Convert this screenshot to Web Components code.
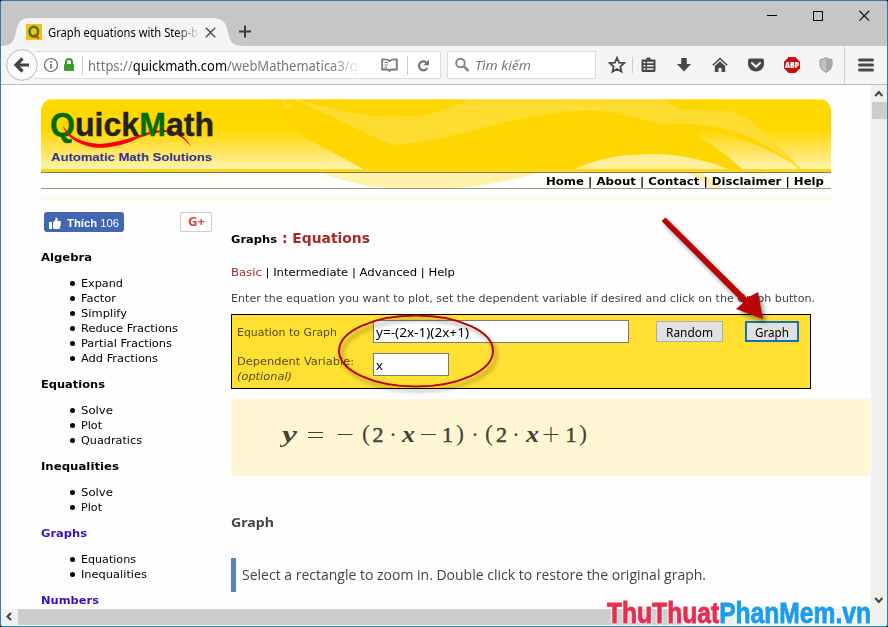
<!DOCTYPE html>
<html lang="vi">
<head>
<meta charset="utf-8">
<title>Graph equations with Step-by-Step Math Problem Solver</title>
<style>
html,body{margin:0;padding:0}
body{width:888px;height:627px;overflow:hidden;background:#000}
</style>
</head>
<body>
<browser-window>
  <browser-tabs></browser-tabs>
  <browser-toolbar></browser-toolbar>
  <page-view>
    <site-header slot="header"></site-header>
    <side-menu slot="side"></side-menu>
    <graph-main slot="main"></graph-main>
  </page-view>
  <mark-overlay slot="overlay"></mark-overlay>
</browser-window>

<script>
const fits = [];
function define(name, html, init) {
  const tpl = document.createElement('template');
  tpl.innerHTML = html;
  customElements.define(name, class extends HTMLElement {
    constructor() {
      super();
      this.attachShadow({mode: 'open'}).append(tpl.content.cloneNode(true));
    }
    connectedCallback() { if (init) init(this, this.shadowRoot); }
  });
}

/* Single-line text scaled horizontally to the width given in "w". */
define('fit-text', `<style>
:host{display:inline-block;white-space:pre;flex:none}
span{display:inline-block;transform-origin:0 50%}
</style><span><slot></slot></span>`, (el, root) => {
  fits.push(() => {
    const w = +el.getAttribute('w'), s = root.querySelector('span');
    const n = s.offsetWidth && s.getBoundingClientRect().width;
    el.style.width = w + 'px';
    if (n) s.style.transform = 'scaleX(' + w / n + ')';
  });
});

define('browser-window', `<style>
:host{display:flex;flex-direction:column;position:relative;box-sizing:border-box;width:888px;height:627px;overflow:hidden;
border:1px solid #2c7cbc;border-top-color:#3a76ae;border-bottom-color:#1c84d0;border-radius:3px 3px 3px 3px;background:#fff}
</style><slot></slot><slot name="overlay"></slot>`);

define('browser-tabs', `<style>
:host{display:flex;position:relative;height:45px;background:#c6c6c6;font:12px "Noto Sans",sans-serif;color:#000;flex:none}
.tab{display:flex;align-items:center;box-sizing:border-box;width:238px;height:28px;margin-top:17px;padding-left:25px;position:relative}
.shape{position:absolute;left:0;top:0}
.fav{flex:none;position:relative;margin-right:6px}
.title{position:relative;width:157px;overflow:hidden;-webkit-mask-image:linear-gradient(90deg,#000 128px,transparent 152px);mask-image:linear-gradient(90deg,#000 128px,transparent 152px)}
.x{position:relative;flex:none}
.plus{margin-top:24px;flex:none}
.ctl{margin-left:auto;display:flex;gap:35px;padding:9px 17px 0 0;height:12px}
</style>
<div class="tab">
<svg class="shape" width="242" height="28"><path d="M0 28C10 28 13 24 15 14C17 5 19 0 29 0H212C222 0 225 5 227 14C229 24 232 28 242 28Z" fill="#f5f5f5"/></svg>
<svg class="fav" width="16" height="16"><rect width="16" height="16" fill="#fdbf0c"/><ellipse cx="7.800" cy="7.600" rx="4.300" ry="4.900" fill="none" stroke="#2b7a12" stroke-width="2.500"/><path d="M8 10.500l5 4" stroke="#d84010" stroke-width="2"/></svg>
<div class="title"><fit-text w="150">Graph equations with Step-b</fit-text></div>
<svg class="x" width="11" height="11"><path d="M.8.8l9.400 9.400M10.200.8L.8 10.200" stroke="#444" stroke-width="1.300"/></svg>
</div>
<svg class="plus" width="13" height="13"><path d="M6 .5v12M0 6.500h12" stroke="#3c3c3c" stroke-width="2"/></svg>
<div class="ctl">
<svg width="11" height="12"><path d="M0 5.500h10" stroke="#000"/></svg>
<svg width="11" height="12"><path d="M.5 1.500h9v9h-9z" fill="none" stroke="#000"/></svg>
<svg width="11" height="12"><path d="M.5 1l9.600 9.600M10.100 1L.5 10.600" stroke="#111" stroke-width="1.200"/></svg>
</div>`);

define('browser-toolbar', `<style>
:host{display:flex;align-items:center;height:38px;background:#f5f5f5;border-bottom:1px solid #bcbcbc;flex:none;font:14px "Noto Sans",sans-serif;color:#777}
svg{display:block;flex:none}
.back{margin-left:5px;position:relative}
.url,.search{box-sizing:border-box;height:28px;background:#fff;border:1px solid #ddd;display:flex;align-items:center}
.url{width:406px;margin-left:-3px;border-left:0;padding-left:8px;border-radius:0 2px 2px 0}
.url b{font-weight:400;color:#000}
.sep{width:1px;height:19px;background:#ccc;flex:none}
.addr{width:282px;margin-left:5px;overflow:hidden;-webkit-mask-image:linear-gradient(90deg,#000 243px,transparent 273px);mask-image:linear-gradient(90deg,#000 243px,transparent 273px)}
.search{width:149px;margin-left:6px;padding-left:6px;gap:5px;font-style:italic;font-size:13px}
.c{display:flex;justify-content:center;align-items:center;height:30px;flex:none}
</style>
<svg class="back" width="32" height="32"><circle cx="16" cy="16" r="15.300" fill="#fbfbfb" stroke="#bbb"/><path d="M16.500 9.500L10 16l6.500 6.500M10.500 16H23" fill="none" stroke="#444" stroke-width="3.200"/></svg>
<div class="url">
<svg width="15" height="16"><circle cx="8" cy="8" r="6.500" fill="none" stroke="#666" stroke-width="1.200"/><path d="M8 7v4.500M8 4v1.700" stroke="#666" stroke-width="1.600"/></svg>
<svg width="12" height="16" style="margin:0 7px 0 5px"><path d="M3 8V5a3 3 0 0 1 6 0v3" fill="none" stroke="#3f9b25" stroke-width="2"/><rect x="1" y="7" width="10" height="7" rx="1" fill="#3f9b25"/></svg>
<div class="sep"></div>
<div class="addr"><fit-text w="281">https://<b>quickmath.com</b>/webMathematica3/qui</fit-text></div>
<svg width="17" height="14" style="margin-left:11px"><path d="M8.500 3Q6 .8 1.200 1.500V11.500H7L8.500 13L10 11.500H15.800V1.500Q11 .8 8.500 3Z" fill="none" stroke="#777" stroke-width="1.800"/><path d="M3.500 4.500H7M3.500 7H7M3.500 9.300H6" stroke="#777"/></svg>
<div class="sep" style="margin:0 9px 0 9px"></div>
<svg width="13" height="13"><path d="M10.300 9.200A4.500 4.500 0 1 1 9.200 3.200" fill="none" stroke="#777" stroke-width="2.200"/><path d="M12 .5V6.300H6.200Z" fill="#777"/></svg>
</div>
<div class="search"><svg width="16" height="16"><circle cx="6.500" cy="6" r="4.300" fill="none" stroke="#888" stroke-width="2"/><path d="M9.500 9l5 5" stroke="#888" stroke-width="2.500"/></svg><fit-text w="56">Tìm kiếm</fit-text></div>
<div class="c" style="width:30px;margin-left:6px"><svg width="18" height="18"><path d="M9 1.800l2.100 4.800 5.200.5-4 3.500 1.200 5.100L9 13 4.500 15.700l1.200-5.100-4-3.500 5.200-.5z" fill="none" stroke="#484848" stroke-width="1.800"/></svg></div>
<div class="sep" style="height:16px"></div>
<div class="c" style="width:30px"><svg width="15" height="16"><path d="M.5 3.500Q.5 2.500 1.500 2.500H5L6 .5H9L10 2.500H13.500Q14.500 2.500 14.500 3.500V13.500Q14.500 15 13 15H2Q.5 15 .5 13.500Z" fill="#484848"/><path d="M2.500 5.500h2M6 5.500h6.500M2.500 8.700h2M6 8.700h6.500M2.500 12h2M6 12h6.500" stroke="#f5f5f5" stroke-width="1.500"/></svg></div>
<div class="c" style="width:36px;margin-left:3px"><svg width="16" height="16"><path d="M5.200 1h5.600v6H15L8 14.500 1 7h4.200z" fill="#484848"/></svg></div>
<div class="c" style="width:36px"><svg width="16" height="16"><path d="M.8 8.300L8 1.500l7.200 6.800" fill="none" stroke="#484848" stroke-width="1.500"/><path d="M2.800 9L8 4.200 13.200 9v6H9.500v-4h-3v4H2.800z" fill="#484848"/></svg></div>
<div class="c" style="width:36px"><svg width="16" height="16"><path d="M2 1.500H14Q16 1.500 16 3.500V7A8 7.500 0 0 1 0 7V3.500Q0 1.500 2 1.500Z" fill="#484848"/><path d="M4 6l4 3.800L12 6" fill="none" stroke="#f5f5f5" stroke-width="2" stroke-linecap="round"/></svg></div>
<div class="c" style="width:36px"><svg width="16" height="16"><path d="M4.700 0h6.600L16 4.700v6.600L11.300 16H4.700L0 11.300V4.700z" fill="#c70d0d"/><text x="1" y="10.900" font-family="Open Sans" font-size="8" font-weight="800" fill="#fff" textLength="14" lengthAdjust="spacingAndGlyphs">ABP</text></svg></div>
<div class="c" style="width:32px"><svg width="14" height="16"><path d="M7 .6Q9.500 2.500 13 2.600V8.500Q12.500 13 7 15.500Q1.500 13 1 8.500V2.600Q4.500 2.500 7 .6Z" fill="#c2c2c2" stroke="#999"/><path d="M7 1V15Q12.300 12.500 12.500 8.500V3Q9.500 3 7 1Z" fill="#a9a9a9"/></svg></div>
<div class="sep" style="height:36px;margin-left:2px"></div>
<div class="c" style="width:42px"><svg width="16" height="14"><path d="M1.500 2h13M1.500 7h13M1.500 12h13" stroke="#484848" stroke-width="3" stroke-linecap="round"/></svg></div>`);

define('page-view', `<style>
:host{display:grid;grid-template:524px 16px / 870px 16px;font:11px/15px "DejaVu Sans",Verdana,sans-serif;color:#000}
.doc{overflow:hidden;background:#fefefe;padding:14px 0 0 40px;box-sizing:border-box}
.cols{display:grid;grid-template-columns:190px 639px}
.v,.h{background:#f0f0f0;display:flex}
.v{flex-direction:column;align-items:center;justify-content:space-between}
.h{align-items:stretch}
svg{display:block;flex:none}
.thumb{background:#cdcdcd}
</style>
<div class="doc"><slot name="header"></slot><div class="cols"><slot name="side"></slot><slot name="main"></slot></div></div>
<div class="v"><svg width="16" height="17"><path d="M4.200 11l3.600-4 3.600 4" fill="none" stroke="#444" stroke-width="2"/></svg>
<div class="thumb" style="width:15px;height:17px;margin-bottom:auto"></div>
<svg width="16" height="17"><path d="M4.200 6l3.600 4 3.600-4" fill="none" stroke="#444" stroke-width="2"/></svg></div>
<div class="h"><svg width="17" height="16"><path d="M10 4L6.500 7.500 10 11" fill="none" stroke="#444" stroke-width="2"/></svg><div class="thumb" style="width:665px"></div></div>
<div class="v"></div>`);

define('site-header', `<style>
:host{display:block;width:790px;height:113px}
svg{display:block}
.bar{position:relative;display:flex;justify-content:flex-end;align-items:center;box-sizing:border-box;height:17px;border:1px solid #99948c;border-width:1px 0;border-top-color:#857b48;padding:2px 7px 0 0;font-weight:700;color:#000;background:#fffffa}
.bar svg{position:absolute;left:0;top:0}
fit-text{position:relative}
.strip{height:4px;background:#fffaea;margin-top:7px}
</style>
<svg width="790" height="73" viewBox="41 99 790 73">
<defs><linearGradient id="g" x1="0" y1="0" x2="0" y2="1"><stop offset="0" stop-color="#ffd800"/><stop offset=".43" stop-color="#ffd800"/><stop offset=".7" stop-color="#ffe24f"/><stop offset="1" stop-color="#fff3ad"/></linearGradient>
<clipPath id="c"><path d="M41 172V111Q42 99 54 99H818Q830 99 831 111V172Z"/></clipPath></defs>
<g clip-path="url(#c)">
<rect x="41" y="99" width="790" height="70" fill="url(#g)"/>
<path d="M270 99H700V138Q722 150 742 169H363Q330 150 304 138Q285 120 270 99Z" fill="#ffd600"/>
<path d="M575 169C605 155 635 154 660 154C690 156 710 162 728 169Z" fill="#ffef9b"/>
<path d="M291 99Q318 110 335 118Q362 133 393 145Q350 145 326 135Q372 153 436 139C480 130 530 112 583 111C615 109 642 120 665 125C720 119 770 140 799 169H801C765 130 742 110 722 110H680Q670 102 660 99H472Q448 110 425 115Q374 120 340 110Q315 104 295 99Z" fill="#ffdd30"/>
<path d="M280 99L292 107H286Z" fill="#ffdf3c"/>
<path d="M665 125Q740 119 801 169L790 162Q740 130 665 125Z" fill="#ffd600"/>
<rect x="41" y="99" width="790" height="1" fill="#ffe24f"/>
<rect x="41" y="169" width="790" height="3" fill="#fad820"/>
</g>
<g font-family="Liberation Sans" font-weight="700">
<path d="M63 126Q72 142 100 144Q116 143 140 135Q178 121 191 147Q181 133 165 132Q150 132 130 142Q110 149 94 147.500Q69 143 63 126Z" fill="#f00"/>
<text x="50" y="135.500" font-size="33" textLength="164" lengthAdjust="spacingAndGlyphs" fill="#222" stroke="#222" stroke-width=".4"><tspan fill="#006c00" stroke="#006c00">Q</tspan>uick<tspan fill="#006c00" stroke="#006c00">M</tspan>ath</text>
<path d="M63 126Q70 139 88 143L84 144Q68 140 63 126Z" fill="#f00"/>
<text x="51" y="161" font-size="11.500" textLength="161" lengthAdjust="spacingAndGlyphs" fill="#333390">Automatic Math Solutions</text></g>
</svg>
<div class="bar"><svg width="790" height="15"><path d="M280 0Q317 13 344 15H414Q450 13 496 0Z" fill="#fff2ab"/><path d="M647 0h14l20 15h-12q-9-9-22-15z" fill="#ffeeb0"/><path d="M718 0l16 15h4L722 0z" fill="#fff8d8"/></svg>
<fit-text w="278">Home | About | Contact | Disclaimer | Help</fit-text></div>
<div class="strip"></div>`);

define('menu-group', `<style>
:host{display:block}
h4{margin:0 0 11px;font:700 11px/15px "DejaVu Sans",Verdana,sans-serif;color:var(--head,#000)}
ul{margin:0 0 11px;padding:0 0 0 29px}
li{display:flex;align-items:center;height:15px;gap:6px}
li::before{content:"";width:5px;height:5px;border-radius:50%;background:#000}
</style><h4></h4><ul></ul>`, (el, root) => {
  const fit = (t, w) => { const f = document.createElement('fit-text'); f.setAttribute('w', w); f.textContent = t; return f; };
  const [t, w] = el.getAttribute('label').split(':');
  root.querySelector('h4').append(fit(t, w));
  for (const s of (el.getAttribute('items') || '').split(',').filter(Boolean)) {
    const [a, b] = s.split(':'), li = document.createElement('li');
    li.append(fit(a, b)); root.querySelector('ul').append(li);
  }
});

define('side-menu', `<style>
:host{display:block}
.social{display:flex;justify-content:space-between;width:168px;margin-left:3px;margin-bottom:18px}
.fb{display:flex;align-items:center;box-sizing:border-box;width:80px;height:20px;background:#4267b2;border-radius:3px;color:#fff;font:11px "Liberation Sans",Arial,sans-serif;padding:2px 0 0 4px;gap:5px}
.gp{box-sizing:border-box;width:32px;height:20px;border:1px solid #ccc;border-radius:2px;background:#fff;color:#d9453b;font:700 12px/18px "Open Sans",sans-serif;display:flex;justify-content:center}
.b{--head:#3a0fc0}
</style>
<div class="social"><div class="fb"><svg width="14" height="14"><path d="M1 6h3v7H1zM5 6.500L7.500 4V1.500Q9.700 1 9.700 3.500L9.300 5H12Q13.300 5.200 13 6.500L12 12Q11.700 13 10.500 13H7Q6 13 5 12Z" fill="#fff"/></svg><fit-text w="52"><b>Thích</b> 106</fit-text></div>
<div class="gp"><fit-text w="17">G+</fit-text></div></div>
<menu-group label="Algebra:51" items="Expand:42,Factor:35,Simplify:46,Reduce Fractions:97,Partial Fractions:91,Add Fractions:77"></menu-group>
<menu-group label="Equations:64" items="Solve:32,Plot:21,Quadratics:61"></menu-group>
<menu-group label="Inequalities:78" items="Solve:32,Plot:21"></menu-group>
<menu-group class="b" label="Graphs:46" items="Equations:55,Inequalities:66"></menu-group>
<menu-group class="b" label="Numbers:58"></menu-group>`);

define('equation-form', `<style>
:host{display:grid;grid-template-columns:136px 283px 89px 54px;grid-template-rows:23px 32px;row-gap:10px;box-sizing:border-box;width:580px;height:75px;border:1px solid #000;background:#ffe033;padding:5px 0 0 5px;color:#5a4b14}
.in,.bt{box-sizing:border-box;display:flex;align-items:center;font:13px "Noto Sans",sans-serif;color:#000}
.in{height:23px;background:#fff;border:1px solid #7a7a7a;padding:1px 0 0 2px}
.bt{height:21px;margin-top:1px;background:#e1e1e1;border:1px solid #adadad;justify-content:center}
.focus{border:2px solid #1272b8}
label{padding-top:5px;line-height:15px;display:block}
</style>
<label><fit-text w="100">Equation to Graph</fit-text></label>
<div class="in" style="width:256px"><fit-text w="93">y=-(2x-1)(2x+1)</fit-text></div>
<div class="bt" style="width:67px"><fit-text w="47">Random</fit-text></div>
<div class="bt focus"><fit-text w="34">Graph</fit-text></div>
<label style="padding-top:1px"><fit-text w="117">Dependent Variable:</fit-text><br><i><fit-text w="55">(optional)</fit-text></i></label>
<div class="in" style="width:76px"><fit-text w="7">x</fit-text></div>`);

define('math-line', `<style>
:host{display:flex;align-items:center;box-sizing:border-box;width:639px;height:77px;background:#fff7d3;padding:0 0 5px 49px}
text{font-family:"Liberation Serif","Times New Roman",serif;font-size:24px;fill:#444036}
.v{font-style:italic;font-weight:700}.n{font-size:22px;stroke:#444036;stroke-width:.5px}
</style>
<svg width="310" height="40" viewBox="280 415 310 40">
<text class="v" x="282" y="442" textLength="15" lengthAdjust="spacingAndGlyphs">y</text>
<path d="M308 432.500h15M308 437.500h15M337.500 434.500h15M421 434.500h15M543.500 434.500h15M551 427v15" stroke="#444036" stroke-width="1.200" fill="none"/>
<text x="362" y="441" font-size="25">(</text><text class="n" x="372.500" y="442">2</text><text x="389" y="442">·</text>
<text class="v" x="402" y="442" textLength="13" lengthAdjust="spacingAndGlyphs">x</text>
<text class="n" x="442" y="442">1</text><text x="456" y="441">)</text><text x="471" y="442">·</text>
<text x="485" y="441">(</text><text class="n" x="496" y="442">2</text><text x="512" y="442">·</text>
<text class="v" x="526" y="442" textLength="13" lengthAdjust="spacingAndGlyphs">x</text>
<text class="n" x="565.500" y="442">1</text><text x="579" y="441">)</text>
</svg>`);

define('graph-main', `<style>
:host{display:block;color:#444}
.crumb{display:flex;align-items:baseline;height:20px;line-height:20px;margin-top:16px;font-weight:700;color:#000;gap:5px}
.crumb .e{font-size:14px;color:#a52a2a}
.links{margin-top:17px;color:#000;height:15px}
.red{color:#a52a2a}
.hint{margin:11px 0 8px;height:15px;font-size:10.500px}
math-line{margin:10px 0 38px}
h3{margin:0;font:700 13px/16px "Noto Sans",sans-serif;height:16px}
.quote{display:flex;align-items:center;height:34px;border-left:5px solid #5588b4;padding-left:6px;margin-top:28px;font:14px "Open Sans",sans-serif}
.quote fit-text{margin-top:-1px}
</style>
<div class="crumb"><fit-text w="46">Graphs</fit-text><fit-text class="e" w="88">: Equations</fit-text></div>
<div class="links"><fit-text w="224"><span class="red">Basic</span> | Intermediate | Advanced | Help</fit-text></div>
<div class="hint"><fit-text w="584">Enter the equation you want to plot, set the dependent variable if desired and click on the Graph button.</fit-text></div>
<equation-form></equation-form>
<math-line></math-line>
<h3><fit-text w="43">Graph</fit-text></h3>
<div class="quote"><fit-text w="464">Select a rectangle to zoom in. Double click to restore the original graph.</fit-text></div>`);

/* Callout ellipse, arrow and site watermark drawn over the window. */
define('mark-overlay', `<style>
:host{position:absolute;left:-1px;top:-1px;width:888px;height:627px;pointer-events:none}
.s{filter:drop-shadow(3px 4px 2px rgba(0,0,0,.4))}
text{font-family:"Liberation Sans Narrow","Liberation Sans",sans-serif;font-weight:700;font-size:30px}
.halo{filter:drop-shadow(0 0 1px #fff) drop-shadow(0 0 1px #fff)}
</style>
<svg width="888" height="627">
<g class="s"><ellipse cx="416" cy="351" rx="77" ry="35.500" fill="none" stroke="#b40808" stroke-width="2"/></g>
<g class="s"><path d="M661.500 221L665.500 217.500 747 298 758 292 763 319 736 309 743 303Z" fill="#b90505"/></g>
<text class="halo" x="607" y="622.500" textLength="264" lengthAdjust="spacingAndGlyphs" stroke-width=".9" fill="#e72e50" stroke="#e72e50">ThuThuat<tspan fill="#1b9ded" stroke="#1b9ded">PhanMem.vn</tspan></text>
</svg>`);

fits.forEach(f => f());
</script>
</body>
</html>
